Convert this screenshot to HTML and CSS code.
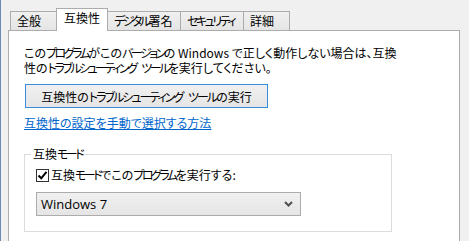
FILE: index.html
```html
<!DOCTYPE html>
<html>
<head>
<title>プロパティ - 互換性</title>
<link rel="stylesheet" href="styles.css">
</head>
<body>

<div class="tabs">
  <div class="tab tab-general">全般</div>
  <div class="tab tab-active">互換性</div>
  <div class="tab tab-sign"><span class="kana">デジタル</span>署名</div>
  <div class="tab tab-security"><span class="kana">セキュリティ</span></div>
  <div class="tab tab-detail">詳細</div>
</div>

<div class="panel">
  <p class="intro">この<span class="kana">プログラム</span>がこの<span class="kana">バージョン</span>の Windows で正しく動作しない場合は、互換<br>性の<span class="kana">トラブルシューティング</span> <span class="kana word-gap">ツール</span>を実行してください。</p>

  <button class="btn">互換性の<span class="kana">トラブルシューティング</span> <span class="kana word-gap">ツール</span>の実行</button>

  <a class="link" href="#">互換性の設定を手動で選択する方法</a>

  <fieldset class="group">
    <legend>互換<span class="kana">モード</span></legend>
    <label class="check">
      <span class="check-box">
        <svg width="11" height="11" viewBox="0 0 11 11"><path d="M1.5 5.5 L4.2 8.3 L9.5 1.8" fill="none" stroke="#000" stroke-width="2"/></svg>
      </span>
      <span>互換<span class="kana">モード</span>でこの<span class="kana">プログラム</span>を実行する:</span>
    </label>
    <div class="select">
      <span class="select-value">Windows 7</span>
      <svg width="9" height="6" viewBox="0 0 9 6"><path d="M1 1 L4.5 4.5 L8 1" fill="none" stroke="#505050" stroke-width="2"/></svg>
    </div>
  </fieldset>
</div>

</body>
</html>
```

FILE: styles.css
```css
body {
  margin: 0;
  height: 241px;
  overflow: hidden;
  box-sizing: border-box;
  border-left: 1px solid #6b8bb0;
  background: #f0f0f0;
  font-family: "Noto Sans CJK JP", sans-serif;
  font-size: 12px;
  font-feature-settings: "palt";
  color: #000;
}

/* katakana is set much narrower in the original UI font */
.kana {
  letter-spacing: -2.5px;
}

.word-gap {
  margin-left: 3px;
}

.tabs {
  display: flex;
  align-items: flex-end;
  height: 30px;
  padding-left: 9px;
}

.tab {
  box-sizing: border-box;
  height: 19px;
  margin-left: -1px;
  padding-left: 6px;
  border: 1px solid #acacac;
  border-bottom: none;
  background: linear-gradient(#f0f0f0, #e5e5e5);
  line-height: 17px;
  white-space: nowrap;
  overflow: hidden;
}

.tab:first-child {
  margin-left: 0;
}

.tab-general {
  width: 47px;
}

.tab-active {
  width: 52px;
  height: 23px;
  margin-bottom: -1px;
  padding-left: 7px;
  background: #fff;
  line-height: 18px;
  position: relative;
  z-index: 1;
}

.tab-sign {
  width: 74px;
}

.tab-security {
  width: 64px;
}

.tab-detail {
  width: 47px;
}

.panel {
  box-sizing: border-box;
  width: 452px;
  height: 260px;
  margin-left: 7px;
  padding: 14px 0 0 15px;
  border: 1px solid #acacac;
  background: #fff;
}

.intro {
  margin: 0;
  line-height: 15px;
}

.btn {
  display: block;
  box-sizing: border-box;
  width: 243px;
  height: 24px;
  margin: 9px 0 0 1px;
  padding: 0;
  border: 1px solid #3c8bd8;
  background: linear-gradient(#f0f0f0, #e5e5e5);
  font: inherit;
  color: #000;
}

.btn .kana {
  letter-spacing: -2px;
}

.link {
  display: block;
  width: fit-content;
  margin-top: 8px;
  line-height: 14px;
  color: #0066cc;
}

.group {
  box-sizing: border-box;
  width: 368px;
  margin: 17px 0 0 0;
  padding: 0 0 15px 11px;
  border: 1px solid #dcdcdc;
}

.group legend {
  margin-left: -5px;
  padding: 0 2px;
  line-height: 14px;
}

.check {
  display: flex;
  align-items: center;
  gap: 2px;
  margin-top: 7px;
  line-height: 14px;
}

.check-box {
  box-sizing: border-box;
  width: 13px;
  height: 13px;
  display: flex;
  align-items: center;
  justify-content: center;
  border: 1px solid #333;
  background: #fff;
}

.select {
  box-sizing: border-box;
  display: flex;
  align-items: center;
  justify-content: space-between;
  width: 265px;
  height: 24px;
  margin-top: 10px;
  padding: 0 4px;
  border: 1px solid #acacac;
  background: linear-gradient(#f0f0f0, #e5e5e5);
}

.select-value {
  font-family: "Open Sans", "Noto Sans", sans-serif;
  font-size: 13px;
}

.select svg {
  margin-right: 3px;
}
```
